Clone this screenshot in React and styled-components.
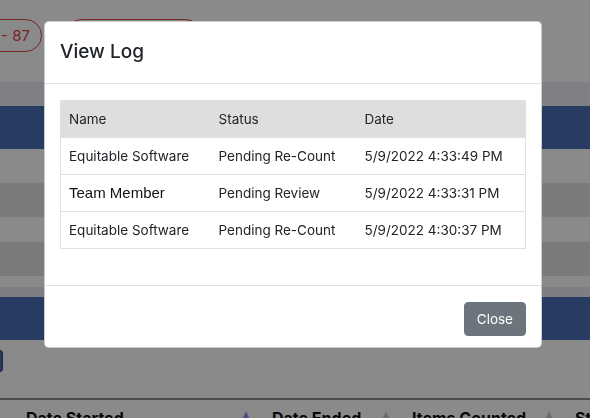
import React from "react";
import styled, { createGlobalStyle } from "styled-components";

const GlobalStyle = createGlobalStyle`
  html, body {
    margin: 0;
    padding: 0;
    width: 590px;
    height: 418px;
    overflow: hidden;
    background: #ffffff;
    font-family: Inter, "Noto Sans", sans-serif;
    color: #212529;
  }
  * { box-sizing: border-box; }
`;

/* ---------- page behind the modal ---------- */

const Page = styled.div`
  display: flex;
  flex-direction: column;
  width: 590px;
  height: 418px;
  overflow: hidden;
`;

const PillBar = styled.div`
  display: flex;
  flex-shrink: 0;
  align-items: flex-start;
  gap: 23px;
  height: 82px;
  padding-top: 19px;
  margin-left: -38px;
`;

const Pill = styled.div`
  display: flex;
  align-items: center;
  justify-content: flex-end;
  width: ${(props) => props.width || "80px"};
  height: 33px;
  padding: 0 11px;
  border: 1px solid #e0414f;
  border-radius: 17px;
  color: #e0414f;
  font-size: 15px;
`;

const Band = styled.div`
  flex-shrink: 0;
  height: ${(props) => props.height};
  background: ${(props) => props.background || "#ffffff"};
`;

const ButtonRow = styled.div`
  display: flex;
  flex-shrink: 0;
  height: 58px;
  padding-top: 10px;
  margin-left: -60px;
`;

const GhostButton = styled.div`
  width: 63px;
  height: 22px;
  border: 1px solid #2c4379;
  border-radius: 3px;
  background: #4a6aab;
`;

const GridHead = styled.div`
  display: flex;
  flex-shrink: 0;
  height: 40px;
  border-top: 2px solid #8e8e8e;
  padding-top: 8px;
`;

const HeadCell = styled.div`
  display: flex;
  justify-content: space-between;
  flex-shrink: 0;
  width: ${(props) => props.width};
  margin-left: ${(props) => props.offset || "0"};
  padding: 0 8px 0 14px;
  font-size: 16px;
  font-weight: 700;
  color: #111111;
  white-space: nowrap;
`;

const SortArrow = styled.span`
  width: 0;
  height: 0;
  margin-top: 3px;
  border-left: 4px solid transparent;
  border-right: 4px solid transparent;
  border-bottom: 9px solid ${(props) => (props.active ? "#8e94f0" : "#c9c9c9")};
`;

/* ---------- modal ---------- */

const Backdrop = styled.div`
  position: fixed;
  inset: 0;
  background: rgba(0, 0, 0, 0.46);
`;

const ModalLayer = styled.div`
  position: fixed;
  inset: 0;
  padding: 21px 0 0 44px;
`;

const Modal = styled.div`
  display: flex;
  flex-direction: column;
  width: 498px;
  background: #ffffff;
  border: 1px solid rgba(0, 0, 0, 0.2);
  border-radius: 5px;
`;

const ModalHeader = styled.div`
  padding: 15px 15px 16px;
  border-bottom: 1px solid #dee2e6;
`;

const ModalTitle = styled.h5`
  margin: 0;
  font-size: 19px;
  font-weight: 500;
  line-height: 30px;
  color: #212529;
`;

const ModalBody = styled.div`
  padding: 16px 15px;
`;

const LogTable = styled.table`
  width: 100%;
  margin-bottom: 20px;
  border-collapse: collapse;
  table-layout: fixed;
  border: 1px solid #dee2e6;
  font-size: 13.5px;
  line-height: 20px;
  color: #212529;
`;

const HeadRow = styled.tr`
  background: #dedede;
`;

const Th = styled.th`
  width: ${(props) => props.width || "auto"};
  padding: 8px;
  font-weight: 400;
  text-align: left;
  border-bottom: 1px solid #dee2e6;
`;

const Td = styled.td`
  padding: 8px;
  border-bottom: 1px solid #dee2e6;
  white-space: nowrap;
  font-family: ${(props) =>
    props.legacy ? '"Liberation Sans", Arial, sans-serif' : "inherit"};
  font-size: ${(props) => (props.legacy ? "15px" : "inherit")};
  color: ${(props) => (props.legacy ? "#111111" : "inherit")};
`;

const ModalFooter = styled.div`
  display: flex;
  justify-content: flex-end;
  padding: 16px 15px 11px;
  border-top: 1px solid #dee2e6;
`;

const CloseButton = styled.button`
  height: 34px;
  padding: 0 12px;
  border: 1px solid #6c757d;
  border-radius: 4px;
  background: #6c757d;
  color: #ffffff;
  font-family: Inter, "Noto Sans", sans-serif;
  font-size: 13.5px;
  line-height: 20px;
  cursor: pointer;
`;

const logs = [
  { name: "Equitable Software", status: "Pending Re-Count", date: "5/9/2022 4:33:49 PM" },
  { name: "Team Member", status: "Pending Review", date: "5/9/2022 4:33:31 PM", legacy: true },
  { name: "Equitable Software", status: "Pending Re-Count", date: "5/9/2022 4:30:37 PM" },
];

export default function App() {
  return (
    <>
      <GlobalStyle />
      <Page>
        <PillBar>
          <Pill>- 87</Pill>
          <Pill width="137px" />
        </PillBar>
        <Band height="24px" background="#ebedf4" />
        <Band height="43px" background="#486eb8" />
        <Band height="34px" />
        <Band height="34px" background="#e3e3e3" />
        <Band height="25px" />
        <Band height="34px" background="#e3e3e3" />
        <Band height="11px" />
        <Band height="10px" background="#e8eaf0" />
        <Band height="43px" background="#486eb8" />
        <ButtonRow>
          <GhostButton />
        </ButtonRow>
        <GridHead>
          <HeadCell width="246px" offset="12px">
            Date Started <SortArrow active />
          </HeadCell>
          <HeadCell width="140px">
            Date Ended <SortArrow />
          </HeadCell>
          <HeadCell width="163px">
            Items Counted <SortArrow />
          </HeadCell>
          <HeadCell width="120px">Status</HeadCell>
        </GridHead>
      </Page>

      <Backdrop />
      <ModalLayer>
        <Modal>
          <ModalHeader>
            <ModalTitle>View Log</ModalTitle>
          </ModalHeader>
          <ModalBody>
            <LogTable>
              <thead>
                <HeadRow>
                  <Th width="150px">Name</Th>
                  <Th width="146px">Status</Th>
                  <Th>Date</Th>
                </HeadRow>
              </thead>
              <tbody>
                {logs.map((log, i) => (
                  <tr key={i}>
                    <Td legacy={log.legacy}>{log.name}</Td>
                    <Td>{log.status}</Td>
                    <Td>{log.date}</Td>
                  </tr>
                ))}
              </tbody>
            </LogTable>
          </ModalBody>
          <ModalFooter>
            <CloseButton>Close</CloseButton>
          </ModalFooter>
        </Modal>
      </ModalLayer>
    </>
  );
}
